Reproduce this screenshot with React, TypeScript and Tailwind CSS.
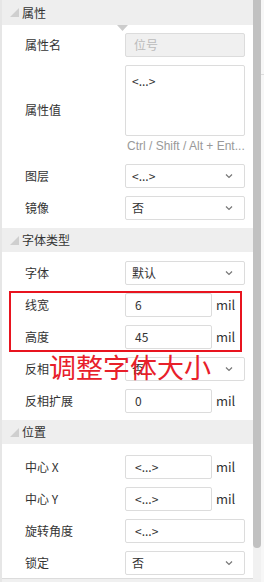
import React from "react";

const font = { fontFamily: '"Noto Sans CJK SC", "Noto Sans", sans-serif' };

function Chevron() {
  return (
    <svg width="8" height="5" viewBox="0 0 8 5" className="absolute right-[11px] top-1/2 -translate-y-1/2">
      <path d="M1 1 L4 4 L7 1" fill="none" stroke="#777" strokeWidth="1.2" />
    </svg>
  );
}

function Header({ title }: { title: string }) {
  return (
    <div className="flex h-[24px] items-center bg-[#eeeeee]">
      <svg width="9" height="9" viewBox="0 0 9 9" className="ml-[8px] mr-[3px]">
        <polygon points="9,0 9,9 0,9" fill="#cfcfcf" />
      </svg>
      <span className="text-[12px] text-[#333]">{title}</span>
    </div>
  );
}

function Row({ label, children }: { label: string; children: React.ReactNode }) {
  return (
    <div className="flex h-[24px] items-center">
      <div className="w-[123px] pl-[23px] text-[12px] text-[#333]">{label}</div>
      {children}
    </div>
  );
}

function Select({ value }: { value: string }) {
  return (
    <div className="relative flex h-[24px] w-[120px] items-center rounded-[2px] border border-[#dcdcdc] bg-white pl-[6px] text-[12px] text-[#333]">
      {value}
      <Chevron />
    </div>
  );
}

function Input({ value, short, unit }: { value: string; short?: boolean; unit?: boolean }) {
  return (
    <>
      <div
        className={`flex h-[24px] items-center rounded-[2px] border border-[#dcdcdc] bg-white pl-[9px] text-[12px] text-[#333] ${
          short ? "w-[87px]" : "w-[120px]"
        }`}
      >
        {value}
      </div>
      {unit && <span className="ml-[4px] text-[13px] text-[#333]">mil</span>}
    </>
  );
}

export default function App() {
  return (
    <div className="relative flex h-[582px] w-[264px] overflow-hidden bg-[#f0f0f0]" style={font}>
      <div className="w-[2px] bg-[#e6e6e6]" />
      <div className="flex h-[579px] w-[251px] flex-col border-b border-[#dcdcdc] bg-white">
        {/* 属性 */}
        <div className="flex h-[25px] items-center bg-[#eeeeee]">
          <svg width="9" height="9" viewBox="0 0 9 9" className="ml-[8px] mr-[3px]">
            <polygon points="9,0 9,9 0,9" fill="#cfcfcf" />
          </svg>
          <span className="text-[12px] text-[#333]">属性</span>
        </div>
        <div className="flex flex-col gap-[8px] pt-[8px]">
          <Row label="属性名">
            <div className="flex h-[24px] w-[120px] items-center rounded-[2px] border border-[#dcdcdc] bg-[#f0f0f0] pl-[8px] text-[12px] text-[#bbb]">
              位号
            </div>
          </Row>
          <div>
            <div className="flex h-[71px] items-center">
              <div className="w-[123px] pt-[18px] pl-[23px] text-[12px] text-[#333]">属性值</div>
              <div className="h-[71px] w-[120px] rounded-[2px] border border-[#dcdcdc] bg-white pl-[6px] pt-[6px] text-[12px] text-[#333]">
                &lt;...&gt;
              </div>
            </div>
            <div className="flex h-[20px] items-center pl-[125px] text-[12px] text-[#999]" style={{ fontFamily: '"Liberation Sans", sans-serif' }}>
              Ctrl / Shift / Alt + Ent...
            </div>
          </div>
          <Row label="图层">
            <Select value="<...>" />
          </Row>
          <Row label="镜像">
            <Select value="否" />
          </Row>
        </div>
        <div className="h-[8px]" />

        {/* 字体类型 */}
        <Header title="字体类型" />
        <div className="flex flex-col gap-[8px] pt-[9px]">
          <Row label="字体">
            <Select value="默认" />
          </Row>
          <Row label="线宽">
            <Input value="6" short unit />
          </Row>
          <Row label="高度">
            <Input value="45" short unit />
          </Row>
          <Row label="反相">
            <Select value="否" />
          </Row>
          <Row label="反相扩展">
            <Input value="0" short unit />
          </Row>
        </div>
        <div className="h-[7px]" />

        {/* 位置 */}
        <Header title="位置" />
        <div className="flex flex-col gap-[8px] pt-[11px]">
          <Row label="中心 X">
            <Input value="<...>" short unit />
          </Row>
          <Row label="中心 Y">
            <Input value="<...>" short unit />
          </Row>
          <Row label="旋转角度">
            <Input value="<...>" />
          </Row>
          <Row label="锁定">
            <Select value="否" />
          </Row>
        </div>
      </div>

      {/* scrollbar */}
      <div className="flex h-[579px] w-[8px] flex-col bg-[#f1f1f1]">
        <div className="h-[548px] rounded-b-[4px] bg-[#c1c1c1]" />
      </div>
      <div className="flex w-[3px] flex-col bg-[#f7f7f7]">
        <div className="h-[74px]" />
        <div className="h-px bg-[#dddddd]" />
      </div>

      {/* caret under header */}
      <svg width="11" height="6" viewBox="0 0 11 6" className="absolute left-[117px] top-[25px]">
        <polygon points="0,0 11,0 5.5,6" fill="#cccccc" />
      </svg>

      {/* annotation */}
      <div className="pointer-events-none absolute left-[9px] top-[291px] h-[61px] w-[233px] border-2 border-[#e8141f]" />
      <div className="pointer-events-none absolute left-[49px] top-[352px] text-[27px] leading-[30px] text-[#e8202a]">
        调整字体大小
      </div>
    </div>
  );
}
